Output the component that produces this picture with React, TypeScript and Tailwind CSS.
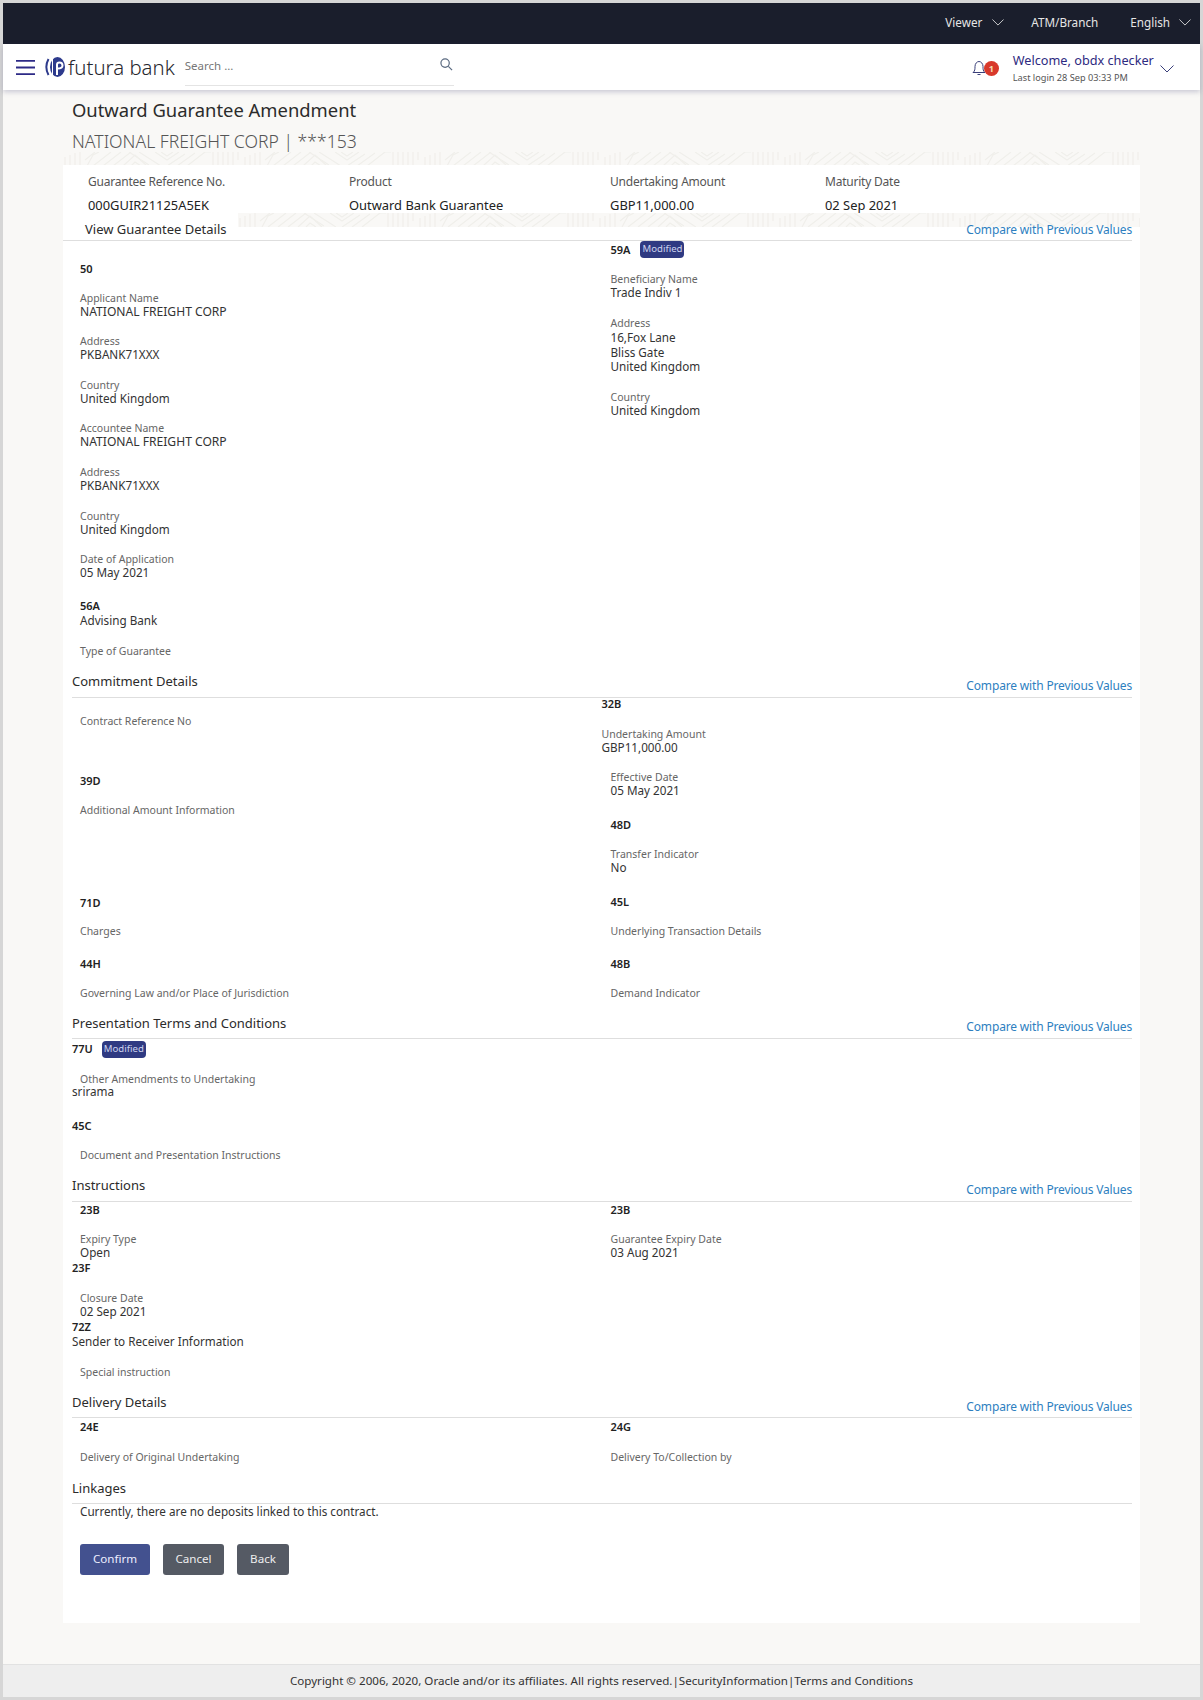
import React from "react";

const Code = ({ children, className = "" }: { children: React.ReactNode; className?: string }) => (
  <div className={`h-[14px] text-[11px] leading-[14px] font-semibold text-[#222] ${className}`}>{children}</div>
);
const Label = ({ children, className = "" }: { children: React.ReactNode; className?: string }) => (
  <div className={`h-[13px] text-[10.5px] leading-[15px] text-[#666] whitespace-nowrap ${className}`}>{children}</div>
);
const Value = ({ children, className = "" }: { children: React.ReactNode; className?: string }) => (
  <div className={`h-[14px] text-[11.7px] text-[#333] whitespace-nowrap ${className || "leading-[14px]"}`}>{children}</div>
);
const Badge = ({ className }: { className: string }) => (
  <span className={`flex h-[17px] w-[44px] items-center justify-center rounded-[4px] bg-[#2f3a82] text-[9.6px] text-[#ccd2ee] ${className}`}>Modified</span>
);
const Head = ({ title, compare = true, size = "h-[26px]", titleTop = "" }: { title: string; compare?: boolean; size?: string; titleTop?: string }) => (
  <div className={`-mb-[1px] flex items-start justify-between border-b border-[#dedede] ${size}`}>
    <span className={`text-[13px] leading-[18px] text-[#2b2b2b] ${titleTop}`}>{title}</span>
    {compare && <span className="mt-[7px] text-[12px] leading-[14px] tracking-[-0.16px] text-[#2e7fbf]">Compare with Previous Values</span>}
  </div>
);
const Chevron = ({ className, stroke }: { className: string; stroke: string }) => (
  <svg viewBox="0 0 14 8" className={className} fill="none" stroke={stroke} strokeWidth="1">
    <path d="M0.5 0.5 L7 7 L13.5 0.5" />
  </svg>
);
const Strip = ({ id }: { id: string }) => (
  <svg className="h-full w-full bg-[#f9f8f6]" preserveAspectRatio="none">
    <defs>
      <pattern id={id} width="180" height="14" patternUnits="userSpaceOnUse">
        <g fill="none" stroke="#f0efeb" strokeWidth="1.2">
          <path d="M2 14 V5 M7 14 V3 M12 14 V1 M17 14 V0" />
          <path d="M24 14 L30 3 L36 0 M22 8 L32 0" />
          <path d="M30 14 L48 0 M40 14 L58 0 M50 14 L68 0" />
          <path d="M60 14 L72 3 L84 14 M68 14 L72 10 L78 14" />
          <path d="M66 0 L86 13 M76 0 L98 14 M92 0 L104 8 L116 0 M98 0 L104 4 L110 0" />
          <path d="M104 14 L122 2 M114 14 L132 1 M124 14 L142 0 H148" />
          <path d="M150 0 V14 M155 0 V14 M160 0 V14 M165 0 V14 M170 0 V14 M175 0 V8" />
        </g>
      </pattern>
    </defs>
    <rect width="100%" height="100%" fill={`url(#${id})`} />
  </svg>
);

export default function App() {
  return (
    <div className="flex h-[1700px] w-full flex-col border-[3px] border-[#d6d6d6] bg-[#f9f8f6] font-['Noto_Sans',sans-serif]">
      {/* top bar */}
      <div className="flex h-[41px] shrink-0 items-center justify-end bg-[#1a1e2c] pb-[2px] text-[11.7px] text-[#e6e6e6]">
        <span>Viewer</span>
        <Chevron className="ml-[10px] h-[7px] w-[12px]" stroke="#e6e6e6" />
        <span className="ml-[27px]">ATM/Branch</span>
        <span className="ml-[32px]">English</span>
        <Chevron className="ml-[9px] mr-[9px] h-[7px] w-[12px]" stroke="#e6e6e6" />
      </div>
      {/* nav */}
      <div className="relative z-10 flex h-[46px] shrink-0 items-center bg-white pl-[13px] shadow-[0_2px_5px_rgba(60,60,110,0.25)]">
        <svg viewBox="0 0 20 17" className="h-[17px] w-[19px]" stroke="#2d2a86" strokeWidth="2">
          <path d="M0 1.5H20M0 8.5H20M0 15.5H20" />
        </svg>
        <svg viewBox="0 0 22 24" className="ml-[10px] h-[24px] w-[22px]">
          <path d="M3.5 4 C0.8 9 0.8 15 3.5 20" fill="none" stroke="#2d3a8c" strokeWidth="2" />
          <ellipse cx="12.5" cy="12" rx="7.5" ry="10" fill="#2d3a8c" />
          <path d="M7.5 4 V20" stroke="#fff" strokeWidth="1" />
          <path d="M12 20 V9.5 Q12 7.5 14.5 7.5 Q17.5 7.5 17.5 10.5 Q17.5 13.5 12.5 13.5" fill="none" stroke="#fff" strokeWidth="2" />
        </svg>
        <span className="ml-[1px] text-[20.4px] font-light leading-none text-[#26262e]">futura bank</span>
        <div className="-mt-[1px] ml-[10px] flex h-[38px] w-[269px] items-center justify-between border-b border-[#e4e4e4] pr-[1px]">
          <span className="text-[11.5px] text-[#777]">Search ...</span>
          <svg viewBox="0 0 14 14" className="mb-[4px] h-[13px] w-[13px]" fill="none" stroke="#5a6a80" strokeWidth="1.3">
            <circle cx="5.5" cy="5.5" r="4.5" />
            <path d="M9 9 L13 13" />
          </svg>
        </div>
        <div className="relative ml-[518px] h-[20px] w-[30px]">
          <svg viewBox="0 0 14 16" className="absolute left-0 top-[3px] h-[16px] w-[14px]" fill="none" stroke="#3a3f7a" strokeWidth="1">
            <path d="M1 12.5 C3 11 3 9 3 6.5 C3 3.5 5 1.5 7 1.5 C9 1.5 11 3.5 11 6.5 C11 9 11 11 13 12.5 Z" />
            <path d="M5.5 14.5 H8.5" />
          </svg>
          <span className="absolute left-[12px] top-[4px] flex h-[15px] w-[15px] items-center justify-center rounded-full bg-[#d8392b] text-[9px] font-bold text-[#f5d9b0]">1</span>
        </div>
        <div className="ml-[11px] flex flex-col">
          <span className="text-[12.7px] leading-[18px] text-[#2d2a80]">Welcome, obdx checker</span>
          <span className="mt-[2px] text-[9.2px] leading-[13px] text-[#555]">Last login 28 Sep 03:33 PM</span>
        </div>
        <Chevron className="ml-[5px] mt-[3px] h-[8px] w-[16px]" stroke="#3a3f7a" />
      </div>
      {/* main */}
      <div className="flex min-h-0 flex-1 flex-col pl-[60px]">
        <div className="ml-[9px] mt-[10px] text-[18.4px] leading-[20px] text-[#2b2b2b]">Outward Guarantee Amendment</div>
        <div className="ml-[9px] mt-[11px] text-[17.6px] font-light leading-[20px] text-[#555]">NATIONAL FREIGHT CORP | ***153</div>
        <div className="mt-[1px] h-[13px] w-[1077px]"><Strip id="s1" /></div>
        <div className="relative h-[1458px] w-[1077px] bg-white">
          <div className="absolute left-[175px] right-0 top-[48px] h-[14px]"><Strip id="s2" /></div>
          <div className="relative">
            {/* summary */}
            <div className="flex pl-[25px] pt-[10px]">
              <div className="w-[261px]">
                <div className="text-[12px] leading-[14px] tracking-[-0.22px] text-[#555]">Guarantee Reference No.</div>
                <div className="mt-[9px] text-[12.9px] leading-[14px] text-[#222]">000GUIR21125A5EK</div>
              </div>
              <div className="w-[261px]">
                <div className="text-[12px] leading-[14px] tracking-[-0.22px] text-[#555]">Product</div>
                <div className="mt-[9px] text-[12.9px] leading-[14px] text-[#222]">Outward Bank Guarantee</div>
              </div>
              <div className="w-[215px]">
                <div className="text-[12px] leading-[14px] tracking-[-0.22px] text-[#555]">Undertaking Amount</div>
                <div className="mt-[9px] text-[12.9px] leading-[14px] text-[#222]">GBP11,000.00</div>
              </div>
              <div>
                <div className="text-[12px] leading-[14px] tracking-[-0.22px] text-[#555]">Maturity Date</div>
                <div className="mt-[9px] text-[12.9px] leading-[14px] text-[#222]">02 Sep 2021</div>
              </div>
            </div>
            {/* view guarantee details head */}
            <div className="mr-[8px] mt-[9px] flex h-[20px] items-start justify-between border-b border-[#dedede] pl-[22px]">
              <span className="text-[13px] leading-[16px] text-[#2b2b2b]">View Guarantee Details</span>
              <span className="mt-[2px] text-[12px] leading-[14px] tracking-[-0.16px] text-[#2e7fbf]">Compare with Previous Values</span>
            </div>
            <div className="ml-[9px] mr-[8px]">
              {/* section 1 */}
              <div className="flex">
                <div className="w-[538.5px] pl-[8px]">
                  <Code className="mt-[21px]">50</Code>
                  <Label className="mt-[14.5px]">Applicant Name</Label>
                  <Value className="text-[12.1px] leading-[16px]">NATIONAL FREIGHT CORP</Value>
                  <Label className="mt-[16px]">Address</Label>
                  <Value>PKBANK71XXX</Value>
                  <Label className="mt-[17px]">Country</Label>
                  <Value>United Kingdom</Value>
                  <Label className="mt-[16px]">Accountee Name</Label>
                  <Value className="text-[12.1px] leading-[16px]">NATIONAL FREIGHT CORP</Value>
                  <Label className="mt-[17px]">Address</Label>
                  <Value>PKBANK71XXX</Value>
                  <Label className="mt-[17px]">Country</Label>
                  <Value>United Kingdom</Value>
                  <Label className="mt-[16px]">Date of Application</Label>
                  <Value>05 May 2021</Value>
                  <Code className="mt-[20.5px]">56A</Code>
                  <Value>Advising Bank</Value>
                  <Label className="mt-[17px]">Type of Guarantee</Label>
                </div>
                <div>
                  <div className="flex h-[17px] items-center">
                    <Code>59A</Code>
                    <Badge className="ml-[10px]" />
                  </div>
                  <Label className="mt-[13.5px]">Beneficiary Name</Label>
                  <Value>Trade Indiv 1</Value>
                  <Label className="mt-[17px]">Address</Label>
                  <Value className="mt-[1px] leading-[14px]">16,Fox Lane</Value>
                  <Value className="mt-[1px] leading-[14px]">Bliss Gate</Value>
                  <Value className="mt-[0.5px] leading-[14px]">United Kingdom</Value>
                  <Label className="mt-[16.5px]">Country</Label>
                  <Value>United Kingdom</Value>
                </div>
              </div>
              {/* commitment */}
              <div className="mt-[14.5px]">
                <Head title="Commitment Details" />
                <div className="flex">
                  <div className="w-[538.5px] pl-[8px]">
                    <Label className="mt-[17.5px]">Contract Reference No</Label>
                    <Code className="mt-[46.5px]">39D</Code>
                    <Label className="mt-[15.5px]">Additional Amount Information</Label>
                    <Code className="mt-[79.5px]">71D</Code>
                    <Label className="mt-[14.5px]">Charges</Label>
                    <Code className="mt-[19.5px]">44H</Code>
                    <Label className="mt-[15.5px]">Governing Law and/or Place of Jurisdiction</Label>
                  </div>
                  <div>
                    <div className="-ml-[9px]">
                      <Code>32B</Code>
                      <Label className="mt-[16.5px]">Undertaking Amount</Label>
                      <Value>GBP11,000.00</Value>
                    </div>
                    <Label className="mt-[16px]">Effective Date</Label>
                    <Value>05 May 2021</Value>
                    <Code className="mt-[20.5px]">48D</Code>
                    <Label className="mt-[15.5px]">Transfer Indicator</Label>
                    <Value>No</Value>
                    <Code className="mt-[20.5px]">45L</Code>
                    <Label className="mt-[15.5px]">Underlying Transaction Details</Label>
                    <Code className="mt-[19.5px]">48B</Code>
                    <Label className="mt-[15.5px]">Demand Indicator</Label>
                  </div>
                </div>
              </div>
              {/* presentation */}
              <div className="mt-[13.5px]">
                <Head title="Presentation Terms and Conditions" titleTop="mt-[1px]" />
                <div className="mt-[3px] flex h-[17px] items-center">
                  <Code>77U</Code>
                  <Badge className="ml-[9px]" />
                </div>
                <Label className="ml-[8px] mt-[14.5px]">Other Amendments to Undertaking</Label>
                <Value className="-mt-[1px] leading-[14px]">srirama</Value>
                <Code className="mt-[20.5px]">45C</Code>
                <Label className="ml-[8px] mt-[15.5px]">Document and Presentation Instructions</Label>
              </div>
              {/* instructions */}
              <div className="mt-[14.5px]">
                <Head title="Instructions" />
                <div className="flex">
                  <div className="w-[538.5px]">
                    <Code className="ml-[8px] mt-[2px]">23B</Code>
                    <Label className="ml-[8px] mt-[15.5px]">Expiry Type</Label>
                    <Value className="ml-[8px] leading-[14px]">Open</Value>
                    <Code className="mt-[1.5px]">23F</Code>
                    <Label className="ml-[8px] mt-[16.5px]">Closure Date</Label>
                    <Value className="ml-[8px] leading-[14px]">02 Sep 2021</Value>
                    <Code className="mt-[1.5px]">72Z</Code>
                    <Value className="leading-[14px]">Sender to Receiver Information</Value>
                    <Label className="ml-[8px] mt-[17.5px]">Special instruction</Label>
                  </div>
                  <div>
                    <Code className="mt-[2px]">23B</Code>
                    <Label className="mt-[15.5px]">Guarantee Expiry Date</Label>
                    <Value>03 Aug 2021</Value>
                  </div>
                </div>
              </div>
              {/* delivery */}
              <div className="mt-[14.5px]">
                <Head title="Delivery Details" size="h-[25px]" />
                <div className="flex">
                  <div className="w-[538.5px] pl-[8px]">
                    <Code className="mt-[3px]">24E</Code>
                    <Label className="mt-[16.5px]">Delivery of Original Undertaking</Label>
                  </div>
                  <div>
                    <Code className="mt-[3px]">24G</Code>
                    <Label className="mt-[16.5px]">Delivery To/Collection by</Label>
                  </div>
                </div>
              </div>
              {/* linkages */}
              <div className="mt-[15.5px]">
                <Head title="Linkages" compare={false} size="h-[25px]" />
                <Value className="ml-[8px] mt-[1px] leading-[14px]">Currently, there are no deposits linked to this contract.</Value>
                <div className="ml-[8px] mt-[26px] flex">
                  <button className="h-[31px] w-[70px] rounded-[3px] bg-[#43518f] text-[11.6px] text-[#eef]">Confirm</button>
                  <button className="ml-[13px] h-[31px] w-[61px] rounded-[3px] bg-[#555a64] text-[11.6px] text-[#eee]">Cancel</button>
                  <button className="ml-[13px] h-[31px] w-[52px] rounded-[3px] bg-[#555a64] text-[11.6px] text-[#eee]">Back</button>
                </div>
              </div>
            </div>
          </div>
        </div>
      </div>
      {/* footer */}
      <div className="flex h-[33px] shrink-0 items-center justify-center border-t border-[#e2e2e2] bg-[#eeeeee] text-[11.6px] text-[#333]">
        Copyright © 2006, 2020, Oracle and/or its affiliates. All rights reserved.|SecurityInformation|Terms and Conditions
      </div>
    </div>
  );
}
